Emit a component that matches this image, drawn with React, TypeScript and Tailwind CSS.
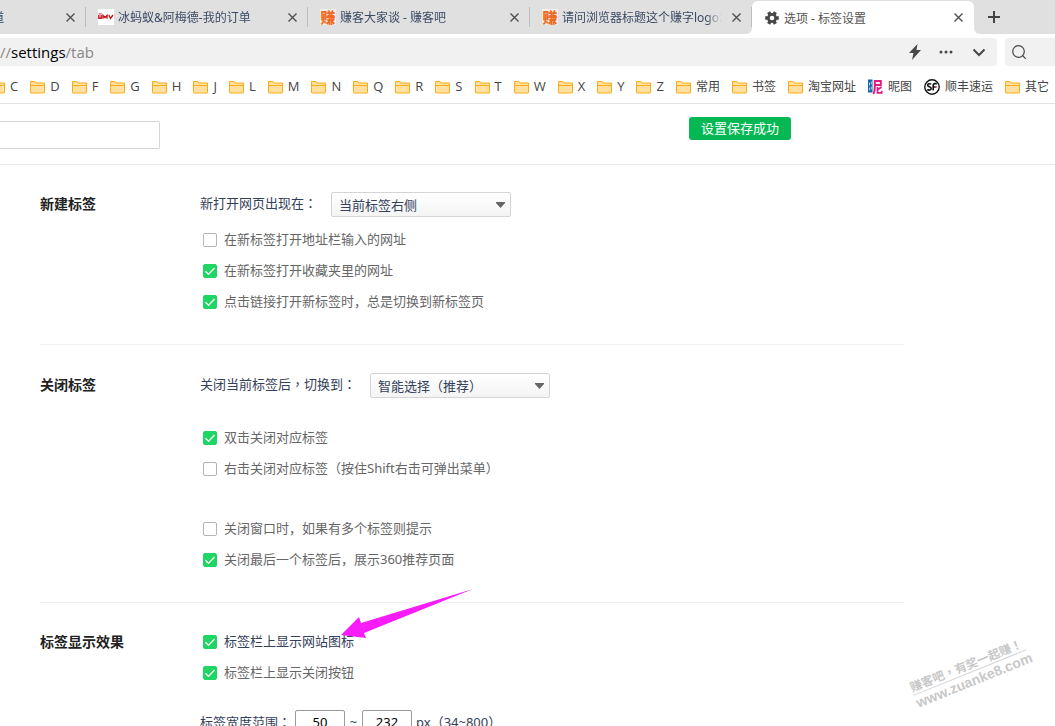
import type { ReactNode } from 'react';

const letters = ['C', 'D', 'F', 'G', 'H', 'J', 'L', 'M', 'N', 'Q', 'R', 'S', 'T', 'W', 'X', 'Y', 'Z'];

function FolderIcon() {
  return (
    <svg className="h-[14px] w-[15px] shrink-0" viewBox="0 0 15 14" fill="none">
      <path d="M.5 12.5V1.500H5l1 1.500h8.500v9.500a.5.5 0 0 1-.5.5H1a.5.5 0 0 1-.5-.5Z" fill="#ffe0a0" stroke="#fbad17" />
      <path d="M.5 5.500h14" stroke="#fbad17" />
    </svg>
  );
}

function NituIcon() {
  return (
    <svg className="h-4 w-[15px] shrink-0" viewBox="0 0 15 16" fill="none">
      <path d="M0 .5h4.500v13H0z" fill="#0f68a8" />
      <path d="M1.500 3.500v3M3.300 2.500v3M1.500 8.500v3M3.300 7.500v3" stroke="#dcebf5" strokeWidth=".8" />
      <path d="M6.800 1v7c0 3-.3 5-1.500 7M6.800 2h6v4h-6" stroke="#e5197f" strokeWidth="2" />
      <path d="M9.500 8v5.800h4.200v-2M13.500 8l-3.500 2.500" stroke="#e5197f" strokeWidth="1.700" />
    </svg>
  );
}

function SfIcon() {
  return (
    <svg className="size-4 shrink-0" viewBox="0 0 16 16" fill="none">
      <circle cx="8" cy="8" r="7.200" fill="#fff" stroke="#111" strokeWidth="1.400" />
      <path d="M7.200 5.200C6 4.300 3.600 4.600 3.600 6.300c0 1.700 3.600 1.300 3.600 3.200 0 1.800-2.600 2-3.900 1M9.200 11.500V6.500c0-1.400.6-1.900 1.700-1.900h1.900M9.200 8h2.500" stroke="#111" strokeWidth="1.600" />
      <path d="M11.500 7.300h1.200v1.400h-1.200z" fill="#e0202a" />
    </svg>
  );
}

function DmvIcon() {
  return (
    <svg className="size-4 shrink-0" viewBox="0 0 16 16" fill="none">
      <path d="M0 0h16v16H0z" fill="#fff" />
      <path d="M.8 6v3.300h2.400V6M.8 4.800h.9M2.500 4.800h.9M5 9.800V6.500L7 8.500l2-2v3.300M10.800 6l1.700 3.500L15 6" stroke="#c9151e" strokeWidth="1.400" />
    </svg>
  );
}

function ZhuanIcon() {
  return (
    <span className="flex size-4 shrink-0 items-center justify-center bg-[#f6efe9] text-[15px] leading-4 font-black text-[#ee6a22]">
      赚
    </span>
  );
}

function GearIcon() {
  return (
    <svg className="size-[14px] shrink-0" viewBox="0 0 14 14" fill="none" stroke="#484848">
      <circle cx="7" cy="7" r="3.700" strokeWidth="2.800" />
      <path
        d="M.2 7h2.600M11.200 7h2.600M3.600 1.100l1.300 2.300M9.100 10.600l1.300 2.300M10.400 1.100 9.100 3.400M4.900 10.600l-1.300 2.300"
        strokeWidth="3.400"
      />
    </svg>
  );
}

function CloseButton() {
  return (
    <button type="button" aria-label="关闭" className="flex size-4 shrink-0 items-center justify-center text-[#505050]">
      <svg className="size-[9px]" viewBox="0 0 9 9" stroke="currentColor" strokeWidth="1.400">
        <path d="M.5.5l8 8M8.500.5l-8 8" />
      </svg>
    </button>
  );
}

function Tab({ icon, title }: { icon: ReactNode; title: string }) {
  return (
    <div className="flex w-[222px] shrink-0 items-center pl-3">
      {icon}
      <span className="ml-1 min-w-0 flex-1 overflow-hidden mask-r-from-90% pt-0.5 whitespace-nowrap">{title}</span>
      <span className="ml-1.5 flex items-center gap-[7px]">
        <CloseButton />
        <span className="h-5 w-px bg-[#bdbdbd]" />
      </span>
    </div>
  );
}

function Bookmark({ icon, label }: { icon?: ReactNode; label: string }) {
  return (
    <a href="#" className="flex shrink-0 items-center gap-[5px]">
      {icon ?? <FolderIcon />}
      <span className={label.length === 1 ? "font-['Open_Sans',sans-serif] text-[13px]" : 'text-xs'}>{label}</span>
    </a>
  );
}

function Section({
  title,
  titleClass = 'leading-[23px]',
  className,
  children,
}: {
  title: string;
  titleClass?: string;
  className: string;
  children: ReactNode;
}) {
  return (
    <section className={`flex ${className}`}>
      <h2 className={`w-40 shrink-0 text-sm font-bold text-[#222] ${titleClass}`}>{title}</h2>
      <div className="flex-1">{children}</div>
    </section>
  );
}

function SelectRow({ id, label, options }: { id: string; label: string; options: string[] }) {
  return (
    <div className="flex items-start gap-[14px] font-['Noto_Sans','Noto_Sans_CJK_TC',sans-serif] text-[#34405a]">
      <label htmlFor={id} className="leading-[23px]">
        {label}
      </label>
      <div className="relative">
        <select
          id={id}
          className="block h-[25px] w-[180px] appearance-none rounded-xs border border-[#d4d4d4] bg-linear-to-b from-white to-[#f4f4f4] pb-0.5 pl-[7px]"
        >
          {options.map((option) => (
            <option key={option}>{option}</option>
          ))}
        </select>
        <svg className="pointer-events-none absolute top-2.5 right-1.5 h-1.5 w-[9px]" viewBox="0 0 9 6" fill="#666">
          <path d="M0 0h9v1L4.500 6 0 1z" />
        </svg>
      </div>
    </div>
  );
}

function CheckRow({ label, checked, dark }: { label: string; checked?: boolean; dark?: boolean }) {
  return (
    <label className={`flex h-[31px] items-center gap-[7px] pl-[3px] ${dark ? 'text-[#34405a]' : 'text-[#666]'}`}>
      <span className="grid size-[14px]">
        <input
          type="checkbox"
          defaultChecked={checked}
          className="peer col-start-1 row-start-1 size-[14px] appearance-none rounded-xs border border-[#b4b4b4] bg-white checked:border-[#1fd665] checked:bg-[#1fd665]"
        />
        <svg
          className="pointer-events-none invisible col-start-1 row-start-1 size-[14px] peer-checked:visible"
          viewBox="0 0 14 14"
          fill="none"
          stroke="#fff"
          strokeWidth="1.300"
        >
          <path d="M2.500 7.200l3 3.200 6-6.400" />
        </svg>
      </span>
      {label}
    </label>
  );
}

export default function App() {
  return (
    <div className="relative h-screen overflow-hidden bg-white font-['Noto_Sans','Noto_Sans_CJK_SC',sans-serif] text-[13px] text-[#444]">
      {/* Tab strip */}
      <div className="flex h-[34px] text-xs leading-5 text-[#3a4a63]">
        <div className="flex shrink-0 rounded-br-md bg-[#e0e0e0]">
          <div className="flex w-[86px] items-center justify-between">
            <span className="flex w-1 justify-end overflow-hidden pt-0.5">道</span>
            <span className="flex items-center gap-[7px]">
              <CloseButton />
              <span className="h-5 w-px bg-[#bdbdbd]" />
            </span>
          </div>
          <Tab icon={<DmvIcon />} title="冰蚂蚁&阿梅德-我的订单" />
          <Tab icon={<ZhuanIcon />} title="赚客大家谈 - 赚客吧" />
          <Tab icon={<ZhuanIcon />} title="请问浏览器标题这个赚字logo怎么" />
        </div>
        <div className="w-[222px] shrink-0 bg-linear-to-b from-[#e0e0e0] from-50% to-white to-50% pt-px">
          <div className="flex h-full items-center rounded-t-md bg-white pr-2 pl-[13px] text-[#555]">
            <GearIcon />
            <span className="ml-[5px] flex-1 pt-0.5">选项 - 标签设置</span>
            <CloseButton />
          </div>
        </div>
        <div className="flex flex-1 items-center rounded-bl-md bg-[#e0e0e0] pl-[14px]">
          <button type="button" aria-label="新建标签页" className="text-[#444]">
            <svg className="size-3" viewBox="0 0 12 12" stroke="currentColor" strokeWidth="2">
              <path d="M6 0v12M0 6h12" />
            </svg>
          </button>
        </div>
      </div>

      {/* Address bar */}
      <div className="flex gap-2 pt-1 text-[#484848]">
        <div className="flex h-7 flex-1 items-center rounded-r-sm bg-[#f1f1f1] pr-3">
          <span className="flex-1 font-['Open_Sans','Noto_Sans_CJK_SC',sans-serif] text-[15px] text-[#888]">
            //<span className="text-black">settings</span>/tab
          </span>
          <button type="button" aria-label="极速模式">
            <svg className="h-4 w-3" viewBox="0 0 12 16" fill="currentColor">
              <path d="M8.500 0 0 9h4.500L3 16l9-10H7.500z" />
            </svg>
          </button>
          <button type="button" aria-label="更多" className="ml-[18px]">
            <svg className="h-4 w-[14px]" viewBox="0 0 14 16" fill="currentColor">
              <circle cx="2" cy="8" r="1.500" />
              <circle cx="7" cy="8" r="1.500" />
              <circle cx="12" cy="8" r="1.500" />
            </svg>
          </button>
          <button type="button" aria-label="展开" className="ml-5">
            <svg className="h-4 w-3" viewBox="0 0 12 16" fill="none" stroke="currentColor" strokeWidth="2">
              <path d="M.5 5.500 6 11l5.500-5.500" />
            </svg>
          </button>
        </div>
        <div className="flex h-7 w-[50px] items-center rounded-l-sm bg-[#f1f1f1] pl-[7px]">
          <button type="button" aria-label="搜索">
            <svg className="size-[14px]" viewBox="0 0 14 14" fill="none" stroke="currentColor" strokeWidth="1.200">
              <circle cx="6.500" cy="6.500" r="5.800" />
              <path d="m10.500 10.500 3.200 3.200" />
            </svg>
          </button>
        </div>
      </div>

      {/* Bookmarks */}
      <nav className="-ml-2.5 flex h-[38px] items-center gap-3 border-b border-[#e2e2e2] pt-1">
        {letters.map((letter) => (
          <Bookmark key={letter} label={letter} />
        ))}
        <Bookmark label="常用" />
        <Bookmark label="书签" />
        <Bookmark label="淘宝网址" />
        <Bookmark icon={<NituIcon />} label="昵图" />
        <Bookmark icon={<SfIcon />} label="顺丰速运" />
        <Bookmark label="其它" />
      </nav>

      {/* Settings header */}
      <header className="relative h-[61px] border-b border-[#e8e8e8] pt-[17px]">
        <input
          type="text"
          aria-label="搜索选项"
          className="block h-7 w-40 rounded-r-xs border border-l-0 border-[#d6d6d6] bg-white px-2"
        />
        <div className="absolute top-[13px] left-[689px] rounded-[3px] bg-[#05b854] px-3 leading-[23px] text-white">
          设置保存成功
        </div>
      </header>

      <main className="ml-10 max-w-[864px] leading-[25px]">
        <Section title="新建标签" className="border-b border-[#f0f0f0] pt-[27px] pb-[27px]">
          <SelectRow id="new-tab" label="新打开网页出现在：" options={['当前标签右侧']} />
          <div className="mt-[7px]">
            <CheckRow label="在新标签打开地址栏输入的网址" />
            <CheckRow label="在新标签打开收藏夹里的网址" checked />
            <CheckRow label="点击链接打开新标签时，总是切换到新标签页" checked />
          </div>
        </Section>

        <Section title="关闭标签" className="border-b border-[#f0f0f0] pt-7 pb-[27px]">
          <SelectRow id="close-tab" label="关闭当前标签后，切换到：" options={['智能选择（推荐）']} />
          <div className="mt-6">
            <CheckRow label="双击关闭对应标签" checked />
            <div className="font-['Noto_Sans','Noto_Sans_CJK_TC',sans-serif]">
              <CheckRow label="右击关闭对应标签（按住Shift右击可弹出菜单）" />
            </div>
          </div>
          <div className="mt-[29px]">
            <CheckRow label="关闭窗口时，如果有多个标签则提示" />
            <CheckRow label="关闭最后一个标签后，展示360推荐页面" checked />
          </div>
        </Section>

        <Section title="标签显示效果" titleClass="leading-[31px]" className="pt-[23px]">
          <CheckRow label="标签栏上显示网站图标" checked dark />
          <CheckRow label="标签栏上显示关闭按钮" checked />
          <div className="mt-[22px] flex items-center gap-1 font-['Noto_Sans','Noto_Sans_CJK_TC',sans-serif] text-[#34405a]">
            <label htmlFor="min-width">标签宽度范围：</label>
            <input
              id="min-width"
              type="text"
              defaultValue="50"
              className="h-[25px] w-[50px] rounded-xs border border-[#999] text-center text-black"
            />
            <span className="w-[9px] text-center">~</span>
            <input
              aria-label="最大宽度"
              type="text"
              defaultValue="232"
              className="h-[25px] w-[50px] rounded-xs border border-[#999] text-center text-black"
            />
            <span>px（34~800）</span>
          </div>
        </Section>
      </main>

      {/* Arrow pointing at the site icon option */}
      <svg className="pointer-events-none absolute top-[588px] left-[341px] h-[52px] w-[134px]" viewBox="0 0 134 52" fill="#f81cf8">
        <path d="M0 47 18 29l2 6L132 1 23 45l2 5z" />
      </svg>

      {/* Watermark */}
      <div className="pointer-events-none absolute top-[656px] left-[909px] w-[122px] -rotate-[22deg] font-bold text-[#c8c8c8]">
        <div className="border-b border-[#d4d4d4] font-['Noto_Sans_CJK_TC',sans-serif] text-xs leading-4 whitespace-nowrap">
          赚客吧，有奖一起赚！
        </div>
        <div className="font-['Liberation_Sans',sans-serif] text-sm leading-4">www.zuanke8.com</div>
      </div>
    </div>
  );
}
